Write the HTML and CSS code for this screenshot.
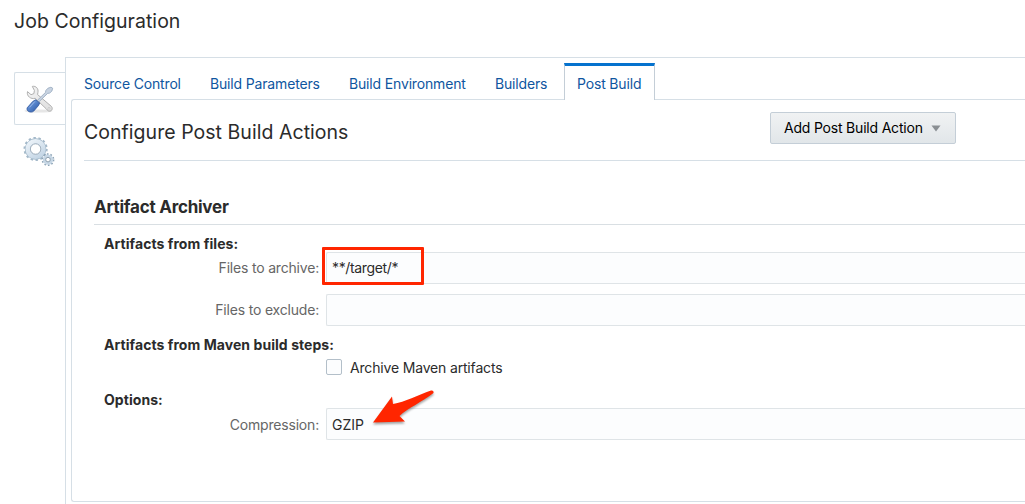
FILE: index.html
```html
<!DOCTYPE html>
<html lang="en">
<head>
<meta charset="utf-8">
<title>Job Configuration</title>
<link rel="stylesheet" href="styles.css">
</head>
<body>
<h1 class="page-title">Job Configuration</h1>
<div class="workspace">
  <nav class="rail">
    <a class="rail-item rail-active">
      <svg class="rail-icon" width="30" height="30" viewBox="0 0 30 30">
        <defs>
          <linearGradient id="metal" x1="0" y1="0" x2="1" y2="1"><stop offset="0" stop-color="#f4f4f4"/><stop offset="1" stop-color="#dedede"/></linearGradient>
          <linearGradient id="handle" x1="0" y1="0" x2="1" y2="1"><stop offset="0" stop-color="#3765b4"/><stop offset=".4" stop-color="#5d8ad0"/><stop offset="1" stop-color="#24509d"/></linearGradient>
        </defs>
        <ellipse cx="14.5" cy="27" rx="14" ry="1.6" fill="#e6e6e6"/>
        <path d="M8.3 2.4 C12 1.6 14.8 4.8 13.9 8.5 L13.6 10.6 L27.5 22.5 C29.4 25 27.3 27.8 24.6 27 C23.3 26.4 22.8 25.5 22 24.6 L11.2 14.3 C7 15.5 2.4 12.3 3.5 7.6 L7 10.7 L9.9 9.6 L10.4 6.4 Z" fill="url(#metal)" stroke="#b0b0b0" stroke-width="1"/>
        <circle cx="25" cy="24.3" r=".9" fill="#fff" stroke="#b5b5b5" stroke-width=".6"/>
        <path d="M21.8 6.5 Q23.5 3.5 27 3.2 L28.7 4.2 Q28.6 7.5 25.7 9.1 L23.6 9.4 L14.8 18 L13.2 16.5 L21.5 8.4 Z" fill="#c8d3e1" stroke="#96a8be" stroke-width=".8"/>
        <path d="M11.6 15.8 L15.7 18.9 L14.5 21.5 L9.8 27 C7.2 29.6 1.8 27.2 3.2 23.8 L8.8 17.4 Z" fill="url(#handle)" stroke="#2f579e" stroke-width=".8"/>
        <path d="M10.8 17.5 L5.5 23.3" stroke="#a5c1eb" stroke-width=".9"/>
      </svg>
    </a>
    <a class="rail-item">
      <svg class="rail-icon" width="32" height="32" viewBox="0 0 32 32">
        <defs><linearGradient id="gear" gradientUnits="userSpaceOnUse" x1="4" y1="2" x2="18" y2="24"><stop offset="0" stop-color="#f3f8fc"/><stop offset="1" stop-color="#bfd2e3"/></linearGradient></defs>
        <circle cx="12.6" cy="13" r="11" fill="none" stroke="#a3b8c9" stroke-width="2.2" stroke-dasharray="2.4 2.537"/>
        <circle cx="12.6" cy="13" r="7.9" fill="none" stroke="#a7bccc" stroke-width="5.6"/>
        <circle cx="12.6" cy="13" r="7.8" fill="none" stroke="url(#gear)" stroke-width="4.6"/>
        <circle cx="12.6" cy="13" r="5.2" fill="#fff" stroke="#9cacba" stroke-width=".9"/>
        <circle cx="25" cy="23.6" r="5.5" fill="none" stroke="#8da4b6" stroke-width="1.8" stroke-dasharray="1.6 1.856"/>
        <circle cx="25" cy="23.6" r="3.8" fill="none" stroke="#c7d7e5" stroke-width="2.8"/>
        <circle cx="25" cy="23.6" r="2.3" fill="#fff" stroke="#8195a6" stroke-width=".9"/>
      </svg>
    </a>
  </nav>
  <main class="panel">
    <div class="tabs">
      <a class="tab">Source Control</a>
      <a class="tab">Build Parameters</a>
      <a class="tab">Build Environment</a>
      <a class="tab">Builders</a>
      <a class="tab tab-active">Post Build</a>
    </div>
    <section class="content">
      <header class="content-head">
        <h2 class="content-title">Configure Post Build Actions</h2>
        <button class="action-button"><span>Add Post Build Action</span><svg width="10" height="7" viewBox="0 0 10 7"><path d="M.5 .5H9.5L5 6.5Z" fill="#8a8f93"/></svg></button>
      </header>
      <div class="archiver">
        <h3 class="archiver-title">Artifact Archiver</h3>
        <div class="form">
          <h4 class="group-title">Artifacts from files:</h4>
          <div class="field field-files">
            <label class="label">Files to archive:</label>
            <div class="input"><span class="glob">**/target/*</span><span class="highlight"></span></div>
          </div>
          <div class="field">
            <label class="label">Files to exclude:</label>
            <div class="input"></div>
          </div>
          <h4 class="group-title group-maven">Artifacts from Maven build steps:</h4>
          <div class="check-row"><span class="checkbox"></span><span class="check-label">Archive Maven artifacts</span></div>
          <h4 class="group-title group-options">Options:</h4>
          <div class="field field-compression">
            <label class="label">Compression:</label>
            <div class="input"><span class="gzip">GZIP</span>
              <svg class="arrow" width="70" height="44" viewBox="0 0 70 44"><path d="M3 34.5 L22 8.5 L23 16 C35 14 48 7 61 2.5 Q64 2 63.5 5 C52 14 38 20 29.5 28 L35 33.5 Z" fill="#ff2600"/></svg>
            </div>
          </div>
        </div>
      </div>
    </section>
  </main>
</div>
</body>
</html>
```
FILE: styles.css
```css
* { box-sizing: border-box; }
body {
  margin: 0;
  height: 504px;
  overflow: hidden;
  background: #fff;
  color: #2b2b2b;
  font: 14px/20px Inter, "Liberation Sans", sans-serif;
  letter-spacing: -0.16px;
  white-space: nowrap;
}
h1, h2, h3, h4 { margin: 0; }
svg { display: block; }
.page-title {
  height: 57px;
  padding: 9px 0 0 14px;
  font-size: 19.5px;
  line-height: 24px;
  font-weight: 400;
  letter-spacing: 0.04px;
}
.workspace { display: flex; height: 447px; }
.rail { width: 65px; padding: 15px 0 0 14px; }
.rail-item { display: flex; height: 53px; padding-left: 9px; align-items: center; }
.rail-active {
  padding-left: 9px;
  border: 1px solid #d6dfe6;
  border-right: 0;
  border-radius: 2px 0 0 2px;
}
.panel {
  flex: 1;
  min-width: 0;
  padding: 5px 0 2px 5px;
  border-top: 1px solid #d6dfe6;
  border-left: 1px solid #d6dfe6;
}
.tabs {
  display: grid;
  grid-template-columns: 126px 139px 146px 82px 91px;
  height: 37px;
}
.tab { padding: 11px 0 0 13px; color: #0f56a0; }
.tab-active {
  position: relative;
  padding: 8px 0 0 12px;
  border: 1px solid #c4ced7;
  border-top: 3px solid #0572ce;
  border-bottom: 0;
  background: #fff;
}
.content {
  height: 403px;
  margin-top: -1px;
  border: 1px solid #d6dfe6;
  border-right: 0;
  border-radius: 3px 0 0 3px;
}
.content-head {
  display: flex;
  height: 61px;
  margin-left: 12px;
  padding-top: 12px;
  border-bottom: 1px solid #d6dfe6;
}
.content-title {
  width: 686px;
  padding-top: 8px;
  font-size: 19.5px;
  line-height: 24px;
  font-weight: 400;
  letter-spacing: 0.04px;
}
.action-button {
  display: flex;
  width: 186px;
  height: 32px;
  padding: 0 14px 0 13px;
  align-items: center;
  justify-content: space-between;
  border: 1px solid #c4ced7;
  border-radius: 2px;
  background: linear-gradient(#f0f2f3, #e1e6e9);
  color: #000;
  font: inherit;
  letter-spacing: -0.2px;
}
.archiver { margin-left: 22px; padding-top: 34px; }
.archiver-title {
  height: 30px;
  border-bottom: 1px solid #d9dfe3;
  font-size: 17px;
  line-height: 24px;
  font-weight: 700;
  letter-spacing: -0.24px;
}
.form { padding: 9px 0 0 10px; }
.group-title { height: 20px; font-size: 14px; font-weight: 700; letter-spacing: 0.06px; }
.field { display: grid; grid-template-columns: 215px 1fr; grid-template-rows: 32px; column-gap: 7px; height: 32px; }
.field-files { margin: -2px 0 10px; }
.label { color: #666; line-height: 32px; text-align: right; letter-spacing: -0.19px; }
.input {
  position: relative;
  padding-left: 5px;
  border: 1px solid #dfe4e7;
  border-right: 0;
  border-radius: 2px 0 0 2px;
  background: #fcfdfe;
  line-height: 30px;
}
.glob { letter-spacing: -0.35px; }
.gzip { letter-spacing: 0; }
.field-compression .label { line-height: 34px; }
.field-compression .input { line-height: 32px; }
.highlight {
  position: absolute;
  left: -5px;
  top: -6px;
  width: 102px;
  height: 38px;
  border: 3px solid #ff2600;
  border-radius: 1px;
}
.arrow {
  position: absolute;
  left: 43px;
  top: -21px;
  filter: drop-shadow(0 2px 1px rgba(0, 0, 0, .35));
}
.group-maven { margin-top: 9px; }
.check-row { display: flex; height: 20px; margin: 3px 0 0 222px; align-items: center; }
.checkbox { width: 16px; height: 16px; margin: 0 8px 2px 0; border: 1px solid #b3bfc9; border-radius: 2px; background: #fcfdfe; }
.check-label { letter-spacing: -0.17px; }
.group-options { height: 18px; margin-top: 12px; }
```
